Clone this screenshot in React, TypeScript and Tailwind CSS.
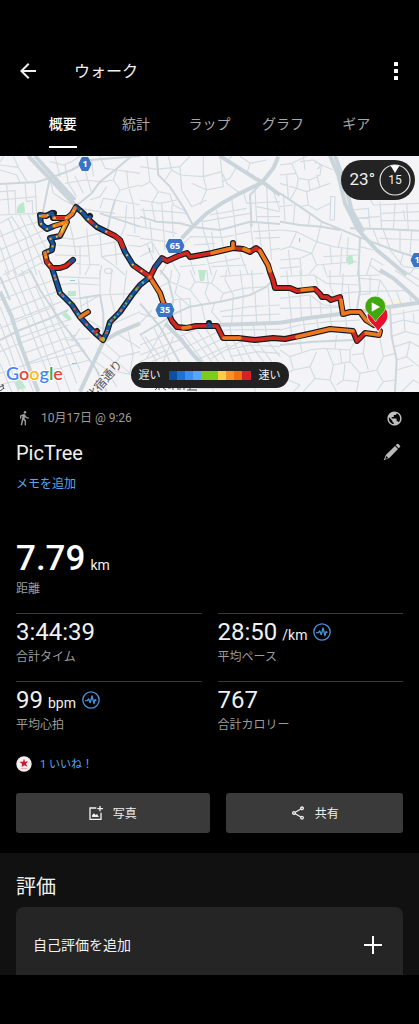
import React from "react";
import { MdArrowBack, MdDirectionsWalk, MdPublic, MdOutlineShare } from "react-icons/md";

type Tile = { x: number; y: number; major: string[]; medium: string[]; minor: string[] };

const tiles: Tile[] = [
  {
    x: 0,
    y: 150,
    major: ["M85 18 L228 168", "M105 18 L225 150"],
    medium: [
      "M0 102 L110 96 L150 84 L215 60 L270 30 L420 18",
      "M228 168 L275 130 L300 95 L345 60 L395 18",
      "M150 85 L142 120 L128 190",
      "M345 150 L330 200 L322 248 M300 190 L420 230",
    ],
    minor: [
      "M0 45 L55 52 L85 100 M55 52 L40 18 M12 18 L0 36 M0 60 L50 75 L60 98",
      "M0 125 L45 122 L48 195 M0 150 L110 140 M20 104 L28 195 M75 100 L80 155 M0 195 L120 190 M105 98 L110 190 M78 155 L97 152 L98 190",
      "M0 220 L35 200 L75 260 L110 375 M0 260 L80 225 L120 215 M0 300 L145 235 M0 335 L150 265 M10 375 L140 305 M25 205 L95 375 M60 195 L130 345 M0 240 L50 375 M0 290 L28 375 M85 195 L140 300 M55 375 L140 330",
      "M150 35 L190 45 L215 35 L240 18 M165 18 L180 80 M195 45 L205 100 L230 140 M150 85 L160 130 L190 150 L220 165",
      "M195 100 L255 90 L300 95 M225 78 L250 130 M255 60 L265 95 L275 130 M275 30 L280 80",
      "M300 20 L315 55 L350 60 L340 90 L300 97 M340 90 L360 120 L345 150 L310 145 L300 175 M360 120 L420 105 M380 60 L385 110 L400 160 M350 60 L420 70 M345 150 L420 165 M320 110 L300 140 L270 150",
      "M240 175 L300 185 L345 190 M330 200 L420 205 M380 165 L375 230 L360 265 M400 160 L405 250 M420 260 L380 255 M420 290 L385 285",
      "M165 260 L220 268 L300 250 L322 248 M210 225 L220 268 L228 320 M260 235 L270 345 L255 375 M170 285 L230 290 L300 285 L350 275 M165 315 L270 318 M300 250 L305 320 L340 345 L375 375 M305 320 L370 310 M240 290 L240 375 M305 345 L300 375 M345 275 L350 345",
      "M228 340 L300 345 M325 355 a12 8 0 1 0 1 0",
    ],
  },
  {
    x: 140,
    y: 150,
    major: ["M415 20 L400 55 L365 98 L300 130 L245 160 L200 190 L160 228 L125 265", "M240 18 L290 50 L350 88 L370 98 L420 135"],
    medium: [
      "M165 232 L240 240 L330 215 L420 222",
      "M0 200 L50 215 L120 220 L165 232",
      "M365 98 L330 135 L335 230",
      "M50 18 L55 75 L90 110 L135 180 L160 228",
    ],
    minor: [
      "M0 50 L50 58 L120 50 L150 18 M20 18 L30 95 L0 110 M30 95 L55 125 L90 132 L100 165 L140 185 M0 150 L60 160 L110 150 M55 125 L35 160 L45 215",
      "M85 18 L95 60 L120 75 L190 80 L245 65 M95 60 L75 90 M120 50 L125 120 L155 170 L200 150 M190 18 L190 80 L200 120 L250 110 L240 18 M155 100 L200 120 L180 165",
      "M245 65 L260 100 L300 130 M290 50 L270 85 L245 95 M300 18 L330 40 L380 30 M330 40 L320 70 M275 18 L260 35",
      "M0 180 L90 185 L140 190 M10 175 L20 240 M65 160 L75 300 M95 165 L100 262 M0 230 L60 240 L110 250 M0 265 L80 275 M30 215 L40 310",
      "M0 290 L35 275 L60 318 M0 320 L40 300 M20 280 L40 330",
      "M185 205 L190 240 L210 305 M230 180 L240 240 L250 290 M275 145 L285 225 L290 285 M210 195 L320 175 M185 215 L330 190",
      "M310 125 L320 160 L420 155 M345 120 L350 215 M380 110 L385 220 L395 330 M400 125 L420 180 M350 170 L420 185 M350 200 L420 200",
      "M330 215 L340 290 M355 220 L365 300 M340 245 L420 240 M345 265 L420 262 M390 300 L420 295",
      "M150 260 L250 262 L330 245 M160 285 L225 280 M110 300 L150 262 M215 245 L222 300",
      "M60 375 L85 335 M95 335 L120 375 M150 328 L165 375 M200 320 L215 375 M255 315 L270 375 M180 345 L300 325 M120 350 L180 345 M300 310 L325 375 M215 350 L320 345",
    ],
  },
  {
    x: 280,
    y: 150,
    major: ["M150 18 L175 75 L195 160 L235 240 L290 300 L380 375", "M165 18 L192 90 L215 180 L250 245"],
    medium: [
      "M0 130 L60 170 L125 215 L240 262 L340 300 L417 325",
      "M0 215 L60 225 L125 230 L180 240",
      "M210 235 L330 238 L417 242",
      "M240 262 L235 375",
    ],
    minor: [
      "M0 45 L35 40 L80 18 M35 40 L55 85 L90 90 L120 75 L125 45 L100 30 L60 35 M55 85 L50 115 L80 125 L85 165",
      "M0 75 L50 70 M20 75 L25 145 M0 100 L50 115 M50 115 L30 150 M80 125 L150 100 M60 170 L85 165 L110 180 L150 160 M85 90 L90 120",
      "M105 40 a9 9 0 1 1 6 16 M70 18 L75 60 M125 45 L160 60 M110 75 L120 110",
      "M152 140 L165 140 L163 210 L150 210 Z M0 170 L40 165 M10 130 L15 215 M45 160 L40 222 M90 190 L85 228 M125 215 L110 275",
      "M200 125 L260 130 L280 165 L417 160 M215 180 L265 175 L270 238 M300 155 L305 238 M345 160 L340 240 M380 160 L385 240 M220 205 L300 200 M305 190 L417 185 M305 212 L417 212 M370 180 L375 212",
      "M0 240 L50 245 L110 275 L160 290 L240 300 M50 245 L30 290 L0 300 M30 290 L95 310 L110 275 M0 330 L60 325 L95 310 M25 300 L35 375 M95 310 L110 345 L85 375 M110 345 L230 335 M150 290 L155 340 M185 295 L180 375 M130 320 L235 315 M130 345 L140 375 M0 355 L60 350 M60 325 L65 375",
      "M185 250 L175 290 M205 262 L200 335 M240 290 L280 300 M280 240 L300 290 M310 240 L330 295 M360 240 L360 308 M395 240 L390 315 M300 265 L417 270",
      "M260 375 L275 325 L310 345 M270 345 L310 375 M330 300 L370 350 L417 355 M370 310 L360 345 M385 375 L417 340",
    ],
  },
  {
    x: 0,
    y: 270,
    major: ["M0 65 L35 140 L60 220 L90 300 L115 365", "M420 160 L350 190 L310 215 L270 300 L240 365"],
    medium: [
      "M90 0 L120 60 L190 165 L230 215 L290 300 L320 365",
      "M0 210 L60 180 L150 145 L205 120",
      "M310 205 L310 130 L300 75 L240 85",
      "M0 20 L30 90",
    ],
    minor: [
      "M0 40 L90 5 M0 90 L160 30 M20 125 L170 65 M30 155 L185 95 M0 175 L150 115 M50 205 L205 150 M0 245 L60 220 L205 165 M70 250 L225 195 M80 280 L240 220 M0 310 L75 285 L255 240 M95 315 L270 270 M0 345 L90 320",
      "M15 0 L65 110 L150 330 M40 0 L110 175 L180 365 M65 0 L140 180 L210 365 M0 110 L60 260 L100 365 M0 160 L30 240 L70 365 M0 220 L25 270 L55 365 M105 45 L180 210 L230 340 M0 280 L35 365 M115 0 L165 120 M150 100 L240 300",
      "M165 20 L300 25 M300 0 L300 75 L420 70 M175 45 L215 40 L300 45 M200 70 L215 110 M210 85 L240 85 L245 120 M235 20 L240 85 M335 0 L330 70 L345 130 M380 0 L370 85 M260 80 L265 120",
      "M300 75 L240 110 M330 165 L420 125 M350 190 L420 235 M310 215 L360 260 L420 245 M360 260 L330 300 L420 320 M290 235 L340 275 M280 270 L320 300 L350 350 M385 185 L400 250 L390 310 M265 150 L305 175",
      "M210 195 L260 260 M195 210 L270 205 M240 175 L215 215 M330 300 L300 365 M350 275 L390 310",
    ],
  },
  {
    x: 140,
    y: 270,
    major: ["M75 160 L120 205 L160 255 L195 290", "M230 165 L320 162 L420 158"],
    medium: [
      "M0 195 L75 150 L105 130 L150 110 L240 95 L330 75",
      "M60 0 L85 30 L100 90 L90 130",
      "M330 75 L380 50 L400 30",
      "M0 100 L60 170 L120 280",
    ],
    minor: [
      "M95 0 L90 35 L60 50 M90 35 L150 60 L185 105 M120 10 L105 70 L150 110 M150 0 L165 35 L215 40 L230 0 M215 40 L250 70 L240 95 M165 35 L150 60 M100 90 L150 85 L155 165 M120 90 L125 165",
      "M200 0 L205 40 L195 70 L210 100 M240 20 L300 15 L370 10 M260 0 L255 30 L280 75 L275 160 M300 0 L310 75 M335 0 L340 70 M250 70 L310 55 L380 50 M185 105 L195 150 M225 95 L215 125 L245 160 M240 125 L330 110 L420 105 M310 80 L305 160 M345 70 L350 160 M385 50 L390 158 M245 140 L420 132",
      "M0 130 L50 145 M0 160 L35 120 M15 200 L60 260 M0 225 L110 180 M0 255 L130 205 M35 275 L150 225 M0 190 L50 275 M40 170 L90 275 M85 150 L20 265 M100 200 L70 275 M0 275 L80 240",
      "M120 180 L190 275 M145 180 L215 275 M170 180 L235 275 M195 172 L255 270 M115 200 L200 165 M140 230 L245 180 M155 250 L250 205 M170 270 L270 225 M215 265 L300 215",
      "M255 210 L280 275 M280 210 L310 275 M300 210 L335 275 M325 215 L370 275 M350 215 L395 275 M380 210 L420 260 M260 240 L330 225 L420 230 M270 260 L350 245 L420 250",
      "M250 180 L420 178 M270 165 L275 205 M305 165 L310 205 M340 160 L345 205 M375 160 L380 205 M0 300 L140 345 L170 365 M0 350 L200 355 L420 352 M210 275 L220 365 M350 275 L345 365",
    ],
  },
  {
    x: 280,
    y: 270,
    major: ["M300 0 L340 25 L380 60 L417 95", "M0 158 L80 145 L180 132 L240 125 L320 112 L417 98"],
    medium: ["M235 0 L240 60 L230 125", "M330 115 L335 200 L350 270 L345 365", "M0 225 L100 215 L220 210"],
    minor: [
      "M0 20 L100 15 L140 40 L235 45 M20 0 L25 50 M60 0 L65 50 M105 15 L115 50 M0 85 L90 75 L130 105 L185 110 M25 60 L35 150 M60 75 L65 148 M90 75 L95 145 M120 100 L125 140 M150 98 L155 135 M0 115 L180 112",
      "M150 0 L150 45 L160 75 M190 10 L185 75 M140 20 L300 15 M240 25 L300 30 L320 60 M270 15 L270 70 L240 75 M185 70 L240 65 L380 62 M205 45 L210 120 M300 30 L290 90 M320 60 L345 115 M350 65 L365 108 M390 80 L395 100 M345 0 L417 50 M370 0 L417 30",
      "M0 180 L60 165 L150 155 L240 150 M30 155 L35 195 M70 150 L75 190 M110 145 L115 180 M150 135 L155 170 M195 130 L200 172",
      "M335 135 L417 120 M335 160 L370 150 L417 160 M370 120 L375 185 L417 195 M335 200 L375 185 M345 230 L390 215 L417 230 M390 215 L380 260 L350 270 M380 260 L417 290 M350 300 L400 285 M365 365 L400 330 L417 340 M400 130 L402 158",
      "M0 240 L30 260 L90 240 L130 235 L210 240 L225 215 M30 260 L40 300 L0 320 M40 300 L90 290 L110 245 M90 290 L105 325 L70 365 M105 325 L150 330 L160 285 L140 235 M150 330 L170 365 M160 285 L210 275 L210 240 M210 275 L240 310 L230 365 M240 310 L290 300 L310 260 L300 205 M310 260 L345 250 M290 300 L310 335 L345 330 M310 335 L290 365 M25 330 L60 345 L40 365 M255 205 L250 250 L215 255 M250 250 L265 300 M180 240 L185 280 M195 280 L190 330 L170 345 M190 330 L235 335",
      "M60 210 L65 245 M170 195 L165 235",
    ],
  },
];

const route = {
  loop: "M40 215 L46 216 L52 213 L54 218 L67 218 L72 214 L76 207 L83 213 L88 219 L97 227 L107 232 L115 236 L120 240 L125 252 L133 265 L140 270 L150 277",
  west: "M40 215 L41 224 L47 229 L54 226 L67 222 L63 230 L60 236 L50 238 L53 244 L52 250 L45 253 L47 262 L52 268",
  spur: "M52 268 L60 268 L66 266 L73 260",
  south: "M52 268 L60 293 L72 305 L80 317 L87 325 L95 333 L103 340",
  rise: "M103 340 L107 332 L110 322 L120 312 L132 295 L140 285 L150 277",
  north:
    "M150 277 L155 267 L162 258 L167 261 L178 256 L187 253 L190 257 L212 253 L233 248 L243 249 L250 252 L256 248 L260 251 L268 265 L270 272 L273 280 L275 288 L290 288 L297 291 L315 289 L320 294 L322 297 L327 297 L331 300 L340 297 L343 314 L350 312 L360 312 L366 320 L374 325",
  lower:
    "M150 277 L155 285 L160 293 L163 302 L172 321 L177 327 L187 328 L196 326 L217 326 L223 338 L238 338 L255 340 L273 338 L285 339 L313 333 L330 329 L353 331 L355 336 L357 341 L365 333 L379 335 L380 331",
  stubs: "M233 248 L233 243 M80 317 L88 312 M209 326 L209 323 M53 218 L54 213 M95 333 L97 331 M88 219 L90 216",
};

const allRoutes = Object.values(route);

function HexBadge({ x, y, label }: { x: number; y: number; label: string }) {
  const w = label.length > 1 ? 9 : 6;
  return (
    <g transform={`translate(${x} ${y})`}>
      <path
        d={`M${-w + 3} -6.500 H${w - 3} L${w} 0 L${w - 3} 6.500 H${-w + 3} L${-w} 0 Z`}
        fill="#3a74c4"
        stroke="#3a74c4"
        strokeWidth="1"
        strokeLinejoin="round"
      />
      <text textAnchor="middle" y="3" fontSize="9" fontWeight="700" fill="#fff">
        {label}
      </text>
    </g>
  );
}

function RouteMap() {
  return (
    <svg
      viewBox="0 156 419 236"
      preserveAspectRatio="xMidYMid slice"
      className="block h-full w-full bg-[#f4f4f6] font-['Open_Sans','Noto_Sans_CJK_JP',sans-serif]"
      role="img"
      aria-label="ルートマップ"
    >
      <g fill="#b9e8cd">
        <path d="M17 213 Q16 204 24 202 L25 213 Z" />
        <path d="M68 291 h8 v5 h-8 Z M62 315 l4 -3 6 7 -3 2 Z M14 382 l7 -2 5 8 -8 2 Z" />
        <path d="M198 270 h8 l-2 11 h-4 Z M346 257 l6 -2 2 8 -6 2 Z" />
      </g>
      <path d="M385 302 L402 298 L404 306 L388 312 Z" fill="#fbf3e2" />
      <g fill="none" strokeLinejoin="round">
        {tiles.map((t) => (
          <g key={`${t.x}-${t.y}`} transform={`translate(${t.x} ${t.y}) scale(0.33333)`}>
            <path d={t.minor.join(" ")} stroke="#d3dce2" strokeWidth="3.500" />
            <path d={t.medium.join(" ")} stroke="#ccd6dc" strokeWidth="6" />
            <path d={t.major.join(" ")} stroke="#cad5db" strokeWidth="12" />
          </g>
        ))}
      </g>
      <g fill="#8fcfd0">
        <path d="M70 280 h5 v1 h-5 Z M72 363 h5 v1 h-5 Z M299 238 h1 v4 h-1 Z M149 248 h1 v4 h-1 Z" />
      </g>

      <g fontSize="12" fill="#55595d" stroke="#f4f4f6" strokeWidth="2" paintOrder="stroke">
        <text transform="translate(92 401) rotate(-50)">北宿通り</text>
      </g>
      <g fill="none" stroke="#4a4e52" strokeWidth="1">
        <path d="M155 390 l2 -2 M159 388 v2 M163 388 l3 2 M168 388 h3 M173 388 v2 M177 389 h4 M184 388 v2 M187 390 h10 M190 388 v2" />
        <path d="M0 387 l4 -2 M0 391 l4 -3 M2 384 l2 5" />
      </g>

      <g fill="none" strokeLinejoin="round" strokeLinecap="round">
        <path d={allRoutes.join(" ")} stroke="#1b1a1c" strokeWidth="6" />
        <path d={route.loop} stroke="#15569f" strokeWidth="3.6" />
        <path d={route.west} stroke="#15569f" strokeWidth="3.6" />
        <path d={route.south} stroke="#15569f" strokeWidth="3.6" />
        <path d={route.rise} stroke="#15569f" strokeWidth="3.6" />
        <path d={route.spur} stroke="#d3261f" strokeWidth="3.6" />
        <path d={route.north} stroke="#d3261f" strokeWidth="3.6" />
        <path d={route.lower} stroke="#d3261f" strokeWidth="3.6" />
        <path
          d="M42 216 L46 216 M54 218 L67 218 L72 214 L75 208 M67 222 L63 230 L60 235 M54 226 L66 222 M45 253 L46 258"
          stroke="#f07a1c"
          strokeWidth="3.6"
        />
        <path d="M46 259 L47 262 L52 268 M56 218 L64 218 M89 220 L92 223 M107 232 L115 236 L120 240 L123 247 M135 267 L140 270 L149 276" stroke="#d3261f" strokeWidth="3.6" />
        <path d="M155 267 L161 259 M208 326 L211 326 M209 326 L209 324 M71 261 L73 260 M88 219 L90 217" stroke="#15569f" strokeWidth="3.6" />
        <path
          d="M212 253 L233 248 M233 248 L233 243 M244 249 L249 251 M260 251 L268 265 L270 271 M302 290 L312 289 M341 300 L343 314 L350 312 L360 312 L366 320 L372 324 M152 281 L160 293 L163 302 M183 328 L190 327 M224 338 L240 338 M297 337 L313 333 L330 329 L353 331 M366 333 L379 335 L380 331 M80 317 L88 312 M103 340 L101 339"
          stroke="#ea7a1e"
          strokeWidth="3.6"
        />
        <g strokeWidth="2.2" strokeLinecap="butt">
          <path d={route.west} stroke="#f4a92a" strokeDasharray="2 6" />
          <path d={route.loop} stroke="#e9b23a" strokeDasharray="2 9" strokeDashoffset="4" />
          <path d={route.south} stroke="#8fb93a" strokeDasharray="2 12" strokeDashoffset="3" />
          <path d={route.south} stroke="#e8482a" strokeDasharray="2 17" strokeDashoffset="10" />
          <path d={route.south} stroke="#4f9be8" strokeDasharray="2 21" strokeDashoffset="16" />
          <path d={route.rise} stroke="#7fb83c" strokeDasharray="2 7" strokeDashoffset="2" />
          <path d={route.rise} stroke="#e0512b" strokeDasharray="2 12" strokeDashoffset="7" />
          <path d={route.rise} stroke="#72a9df" strokeDasharray="1 9" />
        </g>
        <path d="M110 233.500 L115 236 L120 240 L123 247" stroke="#d3261f" strokeWidth="3.6" />
        <path d="M64 226 L62 230" stroke="#f8c43a" strokeWidth="2.5" />
        <circle cx="150" cy="277" r="1.8" fill="#f07a1c" />
        <circle cx="103" cy="339" r="2" fill="#a7b63a" />
        <path d="M95 332 L97 331" stroke="#d3261f" strokeWidth="3" />
      </g>

      <HexBadge x={85} y={164} label="1" />
      <HexBadge x={175} y={246} label="65" />
      <HexBadge x={165} y={310} label="35" />
      <HexBadge x={417} y={260} label="1" />

      <path d="M378 332 C375 325 367 322 367 315 A10.500 10.500 0 0 1 388 315 C388 323 381 326 378 332 Z" fill="#e8112d" stroke="#fff" strokeWidth="1" />
      <path d="M375.500 322 C372 315 365 313 365 306.500 A10.300 10.300 0 0 1 385.600 306.500 C385.600 313 379 315 375.500 322 Z" fill="#3fa80c" stroke="#e9f6e2" strokeWidth="0.600" />
      <path d="M371.700 302.300 L380 307 L371.700 311.700 Z" fill="#fff" />

      <text
        x="6"
        y="380"
        fontSize="18"
        fontWeight="600"
        stroke="#fff"
        strokeWidth="2"
        paintOrder="stroke"
        className="font-['Lato',sans-serif]"
      >
        <tspan fill="#4285f4">G</tspan>
        <tspan fill="#ea4335">o</tspan>
        <tspan fill="#fbbc05">o</tspan>
        <tspan fill="#4285f4">g</tspan>
        <tspan fill="#34a853">l</tspan>
        <tspan fill="#ea4335">e</tspan>
      </text>
    </svg>
  );
}

function PulseIcon() {
  return (
    <svg viewBox="0 0 54 54" className="size-[18px] shrink-0" fill="none" stroke="#4a92dc" aria-hidden="true">
      <circle cx="27" cy="27" r="24.500" strokeWidth="4" />
      <path d="M11 29 H16 L20 24 L25 35 L30 15 L36 38 L39 26 L42 28" strokeWidth="4" strokeLinejoin="round" strokeLinecap="round" />
    </svg>
  );
}

function PencilIcon() {
  return (
    <svg viewBox="0 0 54 54" className="size-[18px]" aria-hidden="true">
      <path d="M42 3 Q44 1 46 3 L51 8 Q53 10 51 12 L47 16 L38 7 Z" fill="#b9b9b9" />
      <path d="M36 9 L45 18 L19 45 L2 52 L9 35 Z" fill="#b9b9b9" />
      <path d="M10 39 L16 45 L7 48 Z" fill="#000" />
    </svg>
  );
}

function AddPhotoIcon() {
  return (
    <svg viewBox="0 0 42 42" className="size-[14px]" fill="none" stroke="#f0f0f0" strokeWidth="4" aria-hidden="true">
      <path d="M22 6 H3 V40 H36 V20" />
      <path d="M33 0 V16 M25 8 H42" />
      <path d="M9 33 V28 L15 22 L20 27 L24 24 L30 33 Z" fill="#f0f0f0" stroke="none" />
    </svg>
  );
}

const tabs = ["概要", "統計", "ラップ", "グラフ", "ギア"];

const paceColors = [
  "bg-[#0b4f9e]",
  "bg-[#1a73d2]",
  "bg-[#3a8ff0]",
  "bg-[#55a5fa]",
  "bg-[#7ecb20]",
  "bg-[#7ecb20]",
  "bg-[#fdcb4a]",
  "bg-[#f9902a]",
  "bg-[#ee7010]",
  "bg-[#d42420]",
];

const stats = [
  { value: "3:44:39", unit: "", label: "合計タイム", pulse: false },
  { value: "28:50", unit: "/km", label: "平均ペース", pulse: true },
  { value: "99", unit: "bpm", label: "平均心拍", pulse: true },
  { value: "767", unit: "", label: "合計カロリー", pulse: false },
];

export default function App() {
  return (
    <div className="min-h-screen bg-black font-['Roboto','Noto_Sans_CJK_JP',sans-serif] text-[#f0f0f0]">
      <header className="pt-11">
        <div className="flex h-[54px] items-center pr-4 pl-4">
          <button type="button" aria-label="戻る" className="flex size-6 items-center justify-center">
            <MdArrowBack className="size-6" />
          </button>
          <h1 className="ml-[34px] pt-[2px] text-base leading-6">ウォーク</h1>
          <button type="button" aria-label="メニュー" className="ml-auto flex h-6 w-[14px] items-center justify-center">
            <svg viewBox="0 0 14 20" className="h-5 w-[14px]" fill="#fff" aria-hidden="true">
              <rect x="5" y="1" width="4" height="4" rx="0.500" />
              <rect x="5" y="8" width="4" height="4" rx="0.500" />
              <rect x="5" y="15" width="4" height="4" rx="0.500" />
            </svg>
          </button>
        </div>
        <div role="tablist" className="grid grid-cols-5 px-[26px]">
          {tabs.map((tab, i) => (
            <button
              key={tab}
              type="button"
              role="tab"
              aria-selected={i === 0}
              className="flex h-[58px] items-start justify-center pt-4 text-sm leading-5 text-[#a8a8a8] aria-selected:font-medium aria-selected:text-white"
            >
              <span className={i === 0 ? "border-b-2 border-white pb-3" : "pb-3"}>{tab}</span>
            </button>
          ))}
        </div>
      </header>

      <section className="relative h-[236px] overflow-hidden">
        <RouteMap />
        <div className="absolute top-1 right-1 flex h-10 items-center gap-1 rounded-full bg-[#232323] pr-1 pl-[9px]">
          <span className="text-[17px]">23°</span>
          <span className="relative flex size-8 items-center justify-center text-xs">
            <svg viewBox="0 0 32 32" className="absolute inset-0 size-8" aria-hidden="true">
              <circle cx="16" cy="16" r="15" fill="none" stroke="#e4e4e4" strokeWidth="1.200" />
              <path d="M11.500 1.500 Q16 0.500 20.500 1.500 L16 9 Z" fill="#fff" />
            </svg>
            15
          </span>
        </div>
        <div className="absolute inset-x-0 bottom-1 flex justify-center">
          <div className="flex h-[26px] items-center gap-2 rounded-full bg-[#212121] px-2 text-[11px]">
            <span className="pt-[2px]">遅い</span>
            <span className="flex w-[82px]" aria-hidden="true">
              {paceColors.map((c, i) => (
                <span key={i} className={`h-[9px] flex-1 ${c}`} />
              ))}
            </span>
            <span className="pt-[2px]">速い</span>
          </div>
        </div>
      </section>

      <main>
        <section className="px-4 pt-[17px] pb-5">
          <div className="flex h-[18px] items-center text-xs text-[#9c9c9c]">
            <MdDirectionsWalk className="size-4" aria-hidden="true" />
            <span className="ml-[9px]">10月17日 @ 9:26</span>
            <MdPublic className="ml-auto size-[17px] text-[#c0c0c0]" aria-label="公開" />
          </div>
          <div className="mt-3 flex h-7 items-center justify-between">
            <h2 className="text-xl">PicTree</h2>
            <button type="button" aria-label="名前を編集" className="pr-[2px] pb-[2px]">
              <PencilIcon />
            </button>
          </div>
          <a href="#memo" className="mt-[7px] block text-xs leading-5 text-[#5ba4ee]">
            メモを追加
          </a>

          <div className="mt-[45px] flex items-baseline gap-[5px] leading-10">
            <span className="text-[35px] font-medium text-white">7.79</span>
            <span className="text-sm leading-5">km</span>
          </div>
          <p className="mt-[2px] text-xs leading-4 text-[#9c9c9c]">距離</p>

          <div className="mt-4 grid grid-cols-2 gap-4">
            {stats.map((s) => (
              <div key={s.label} className="border-t border-[#3a3a3a] pt-1">
                <div className="flex h-7 items-center gap-[6px]">
                  <div className="flex items-baseline gap-[5px] leading-7">
                    <span className="text-2xl leading-7">{s.value}</span>
                    {s.unit && <span className="text-sm">{s.unit}</span>}
                  </div>
                  {s.pulse && <PulseIcon />}
                </div>
                <p className="mt-[3px] text-xs leading-4 text-[#9c9c9c]">{s.label}</p>
              </div>
            ))}
          </div>

          <div className="mt-[22px] flex h-[18px] items-center gap-2">
            <svg viewBox="0 0 48 48" className="size-4" aria-hidden="true">
              <circle cx="24" cy="24" r="23" fill="#f6efef" />
              <path d="M24 8 L27 17 L36 16 L30 23 L34 32 L25 28 L17 33 L18 24 L11 17 L21 17 Z" fill="#d01530" />
              <path d="M14 38 H34" stroke="#e8a9b0" strokeWidth="3" />
            </svg>
            <a href="#likes" className="pt-[2px] text-[11px] text-[#5ba4ee]">
              1 いいね！
            </a>
          </div>

          <div className="mt-5 grid grid-cols-[193fr_177fr] gap-4">
            <button type="button" className="flex h-10 items-center justify-center gap-[10px] rounded-[3px] bg-[#3a3a3a] text-xs">
              <AddPhotoIcon />
              <span className="pt-[2px]">写真</span>
            </button>
            <button type="button" className="flex h-10 items-center justify-center gap-[9px] rounded-[3px] bg-[#3a3a3a] text-xs">
              <MdOutlineShare className="size-4" aria-hidden="true" />
              <span className="pt-[2px]">共有</span>
            </button>
          </div>
        </section>

        <section className="bg-[#111111] px-4 pt-5">
          <h2 className="text-xl leading-7">評価</h2>
          <button
            type="button"
            className="mt-[6px] flex w-full items-center justify-between rounded-t-lg bg-[#252525] pt-6 pr-5 pb-4 pl-[17px] text-left text-sm leading-7"
          >
            自己評価を追加
            <svg viewBox="0 0 20 20" className="size-5" stroke="#fff" strokeWidth="2" aria-hidden="true">
              <path d="M10 1 V19 M1 10 H19" />
            </svg>
          </button>
        </section>
      </main>
    </div>
  );
}
